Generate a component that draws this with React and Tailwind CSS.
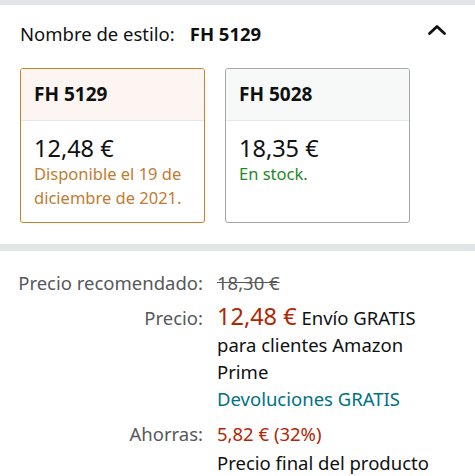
import React from "react";

const Card = ({ name, price, note, noteClass, selected }) => (
  <div
    className={`w-[185px] h-[155px] rounded-[3px] border overflow-hidden ${
      selected ? "border-[#c8822c]" : "border-[#a6a6a6]"
    }`}
  >
    <div
      className={`h-[52px] flex items-center px-[13px] border-b border-[#e7e7e7] font-bold text-[19px] text-[#0f1111] ${
        selected ? "bg-[#fcf5f1]" : "bg-[#f7f8f8]"
      }`}
    >
      {name}
    </div>
    <div className="px-[13px] pt-[13px]">
      <div className="text-[23.5px] leading-[28px] text-[#0f1111]">{price}</div>
      <div className={`text-[16.5px] leading-[24px] ${noteClass}`}>{note}</div>
    </div>
  </div>
);

const Row = ({ label, children }) => (
  <div className="flex">
    <div className="w-[217px] shrink-0 text-right pr-[14px] text-[#565959]">{label}</div>
    <div className="flex-1 pr-[30px]">{children}</div>
  </div>
);

export default function App() {
  return (
    <div className="w-[475px] h-[476px] bg-white overflow-hidden font-['Noto_Sans',sans-serif] text-[#0f1111]">
      <div className="h-[5px] bg-[#e3e6e6]" />
      <div className="flex items-center justify-between pl-[20px] pr-[28px] h-[58px]">
        <div className="text-[18.5px]">
          Nombre de estilo:<span className="font-bold ml-[15px]">FH 5129</span>
        </div>
        <svg width="20" height="12" viewBox="0 0 20 12" fill="none" className="mb-[9px]">
          <path d="M2.5 9.5 L10 2.5 L17.5 9.5" stroke="#0f1111" strokeWidth="2.8" strokeLinecap="round" strokeLinejoin="round" />
        </svg>
      </div>
      <div className="flex gap-[20px] px-[20px] pt-[5px]">
        <Card
          selected
          name="FH 5129"
          price="12,48 €"
          note="Disponible el 19 de diciembre de 2021."
          noteClass="text-[#c27b32]"
        />
        <Card name="FH 5028" price="18,35 €" note="En stock." noteClass="text-[#1f8a1f]" />
      </div>
      <div className="h-[7px] bg-[#e3e6e6] mt-[21px]" />
      <div className="pt-[18px] text-[18.5px] leading-[27px] flex flex-col gap-[8px]">
        <Row label="Precio recomendado:">
          <span className="line-through text-[#565959]">18,30 €</span>
        </Row>
        <Row label="Precio:">
          <span className="text-[23.5px] leading-none text-[#b12704]">12,48 €</span> Envío GRATIS para clientes Amazon Prime
          <div className="text-[#007185]">Devoluciones GRATIS</div>
        </Row>
        <Row label="Ahorras:">
          <span className="text-[#b12704]">5,82 € (32%)</span>
        </Row>
        <div className="-mt-[6px]">
          <Row label="">Precio final del producto</Row>
        </div>
      </div>
    </div>
  );
}
